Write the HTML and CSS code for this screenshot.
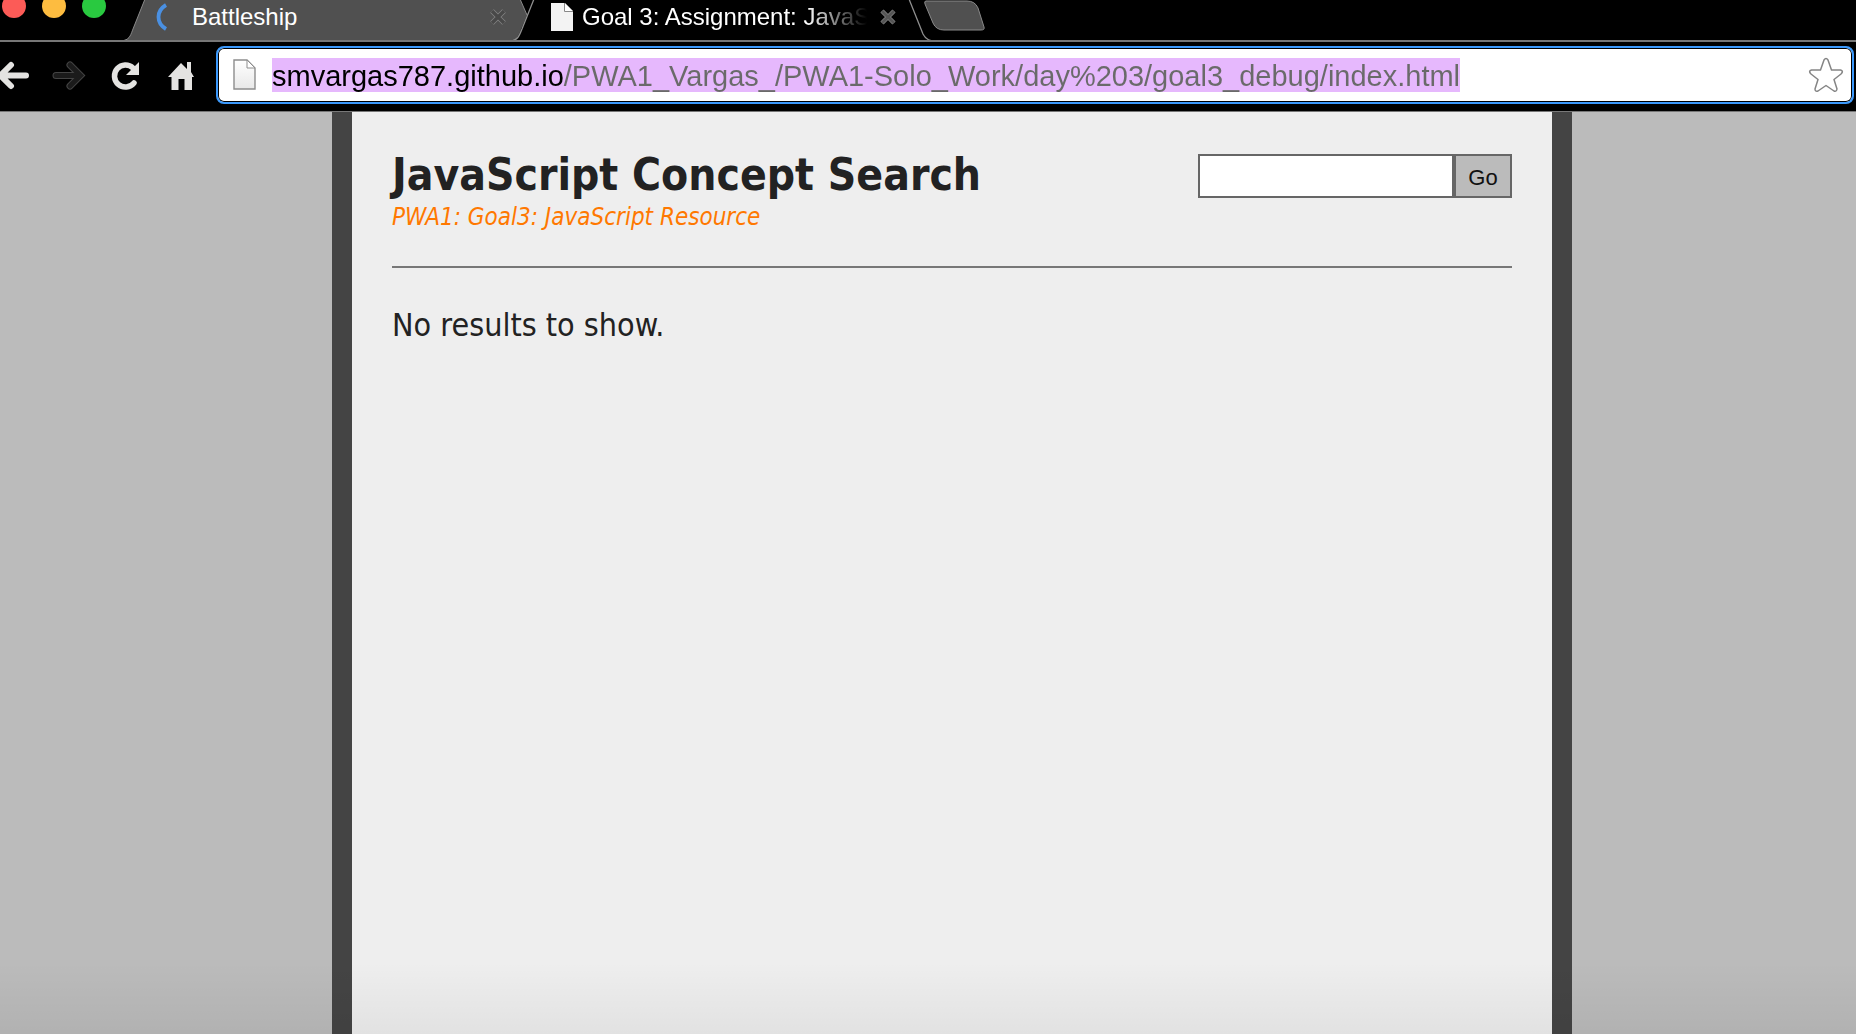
FILE: index.html
```html
<!DOCTYPE html>
<html lang="en">
<head>
<meta charset="utf-8">
<meta name="viewport" content="width=device-width, initial-scale=1">
<title>Goal 3: Assignment: JavaScript</title>
<link rel="stylesheet" href="styles.css">
</head>
<body>
<div class="browser">
  <header class="chrome">
    <div class="tab-strip">
      <svg class="tab-shapes" width="1000" height="42" viewBox="0 0 1000 42" aria-hidden="true">
        <path d="M124 40C130 39 131 34 133 29L145 -1H520L527 15L519 34Q516 41 511 41Z" fill="#505050"/>
        <path d="M124 40.500C130 39 131 34 133 29L145 -1" fill="none" stroke="#8a8a8a"/>
        <path d="M520 -1L527 15" fill="none" stroke="#8a8a8a"/>
        <path d="M511 42C518 41 519 36 522 29L534 -1H909L923 34Q926 41 933 42Z" fill="#000"/>
        <path d="M511 41C518 40 519 36 522 29L534 -1M909 -1L923 34Q926 40 933 41" fill="none" stroke="#8f8f8f" stroke-width="1.300"/>
        <path d="M926 1H967Q975 1 978 8L984 27Q985 30 981 30H944Q936 30 933 23L925 4Q924 1 926 1Z" fill="#505050" stroke="#8a8a8a"/>
      </svg>
      <div class="window-controls">
        <button class="light light-close" aria-label="Close window"></button>
        <button class="light light-minimize" aria-label="Minimize window"></button>
        <button class="light light-zoom" aria-label="Zoom window"></button>
      </div>
      <div class="tab">
        <svg class="tab-icon" width="22" height="28" viewBox="0 0 22 28" aria-hidden="true"><path d="M13 2C3 8 3 20 13 26" fill="none" stroke="#4a90e2" stroke-width="3.800"/></svg>
        <span class="tab-title">Battleship</span>
        <button class="tab-close" aria-label="Close Battleship"><svg width="18" height="18" viewBox="0 0 18 18"><path d="M3 3L15 15M15 3L3 15" stroke="#858585" stroke-width="5"/><path d="M3 3L15 15M15 3L3 15" stroke="#484848" stroke-width="3.500"/></svg></button>
      </div>
      <div class="tab tab-active">
        <svg class="tab-icon" width="22" height="28" viewBox="0 0 22 28" aria-hidden="true"><path d="M0 0H14L22 8V28H0Z" fill="#f3f3f3"/><path d="M13.500 0V8.500H22" fill="#fff" stroke="#888"/></svg>
        <span class="tab-title">Goal 3: Assignment: JavaSc</span>
        <button class="tab-close" aria-label="Close Goal 3"><svg width="18" height="18" viewBox="0 0 18 18"><path d="M3 3L15 15M15 3L3 15" stroke="#858585" stroke-width="4.500"/><path d="M3 3L15 15M15 3L3 15" stroke="#555" stroke-width="3"/></svg></button>
      </div>
    </div>
    <div class="toolbar">
      <nav class="nav-buttons" aria-label="Navigation">
        <button class="nav-button" aria-label="Back"><svg width="36" height="32" viewBox="0 0 36 32"><path d="M30 16.500H5M15 6L4.500 16.500L15 27" fill="none" stroke="#e4e3e1" stroke-width="6" stroke-linecap="round" stroke-linejoin="miter"/></svg></button>
        <button class="nav-button" aria-label="Forward" disabled><svg width="36" height="32" viewBox="0 0 36 32"><path d="M4 16.500H28M18 6L28.500 16.500L18 27" fill="none" stroke="#444" stroke-width="7" stroke-linecap="round"/><path d="M4 16.500H28M18 6L28.500 16.500L18 27" fill="none" stroke="#1b1b1b" stroke-width="5" stroke-linecap="round"/></svg></button>
        <button class="nav-button" aria-label="Reload"><svg width="36" height="32" viewBox="0 0 36 32"><path d="M26 24A11 11 0 1 1 25 9" fill="none" stroke="#e4e3e1" stroke-width="5.500" stroke-linecap="round"/><path d="M31 3V16H18Z" fill="#e4e3e1"/></svg></button>
        <button class="nav-button" aria-label="Home"><svg width="36" height="32" viewBox="0 0 36 32"><path d="M17 4L23 10V3H27V13L30 18H28V31H20.500V20H14.500V31H7.500V18H4Z" fill="#e4e3e1"/></svg></button>
      </nav>
      <div class="omnibox">
        <svg class="page-icon" width="24" height="32" viewBox="0 0 24 32" aria-hidden="true"><defs><linearGradient id="paper" x1="0" y1="0" x2="0" y2="1"><stop offset="0" stop-color="#fff"/><stop offset="1" stop-color="#e8e8e8"/></linearGradient></defs><path d="M1 1H14L22 9V30H1Z" fill="url(#paper)" stroke="#8d8d8d" stroke-width="1.400"/><path d="M14 1V9H22Z" fill="#fff" stroke="#8d8d8d"/></svg>
        <span class="selection"><input class="address" type="text" aria-label="Address" value="smvargas787.github.io/PWA1_Vargas_/PWA1-Solo_Work/day%203/goal3_debug/index.html" spellcheck="false"></span>
        <button class="bookmark" aria-label="Bookmark this page"><svg width="36" height="36" viewBox="0 0 36 36"><path d="M16 3Q18 0 20 3L23.500 13H32.500Q36 14 33 17L26 22.500L29 32Q28.500 35 26 34L18 28.500L10 34Q7 35 7 32L10 22.500L3 17Q0 14 3.500 13H12.500Z" fill="#fff" stroke="#858585" stroke-width="1.500" stroke-linejoin="round"/></svg></button>
      </div>
    </div>
  </header>
  <div class="viewport">
    <main class="page">
      <header class="page-header">
        <div>
          <h1 class="title">JavaScript Concept Search</h1>
          <p class="subtitle">PWA1: Goal3: JavaScript Resource</p>
        </div>
        <form class="search" role="search">
          <input class="search-field" type="text" aria-label="Search concepts">
          <button class="search-button" type="button">Go</button>
        </form>
      </header>
      <p class="results">No results to show.</p>
    </main>
  </div>
</div>
</body>
</html>
```
FILE: styles.css
```css
* { box-sizing: border-box; }

body {
  margin: 0;
  background: #bbb;
  color: #222;
  font-family: "DejaVu Sans Condensed", "DejaVu Sans", sans-serif;
}

button {
  padding: 0;
  border: 0;
  background: none;
}

svg { display: block; }

h1, p { margin: 0; }

.browser {
  display: flex;
  flex-direction: column;
  min-height: 100vh;
}

/* Browser window frame */
.chrome {
  background: #000;
  border-bottom: 1px solid #777;
  font-family: "Liberation Sans", Arial, sans-serif;
}

.tab-strip {
  position: relative;
  display: flex;
  height: 42px;
  overflow: hidden;
  border-bottom: 2px solid #777;
}

.tab-shapes {
  position: absolute;
  top: 0;
  left: 0;
}

.window-controls {
  display: flex;
  gap: 16px;
  width: 153px;
  margin-top: -6px;
  padding-left: 2px;
}

.light {
  width: 24px;
  height: 24px;
  border-radius: 50%;
}

.light-close { background: #fc5b57; }
.light-minimize { background: #fdbc40; }
.light-zoom { background: #29c940; }

.tab {
  position: relative;
  display: flex;
  align-items: center;
  width: 398px;
  height: 33px;
  padding-right: 44px;
  color: #fff;
  font-size: 24px;
  line-height: 32px;
}

.tab-active { width: 390px; }

.tab-icon { margin-right: 17px; }

.tab-active .tab-icon { margin-right: 9px; }

.tab-title {
  flex: 1;
  overflow: hidden;
  white-space: nowrap;
}

.tab-active .tab-title {
  mask-image: linear-gradient(to left, transparent 12px, #000 72px);
}

/* The active tab carries the toolbar, which has no line of its own */
.toolbar {
  display: flex;
  align-items: center;
  height: 69px;
  padding: 4px 2px 7px 0;
}

.nav-buttons {
  display: flex;
  flex: none;
  gap: 20px;
  width: 220px;
  margin-left: -4px;
}

.omnibox {
  display: flex;
  flex: 1;
  align-items: center;
  min-width: 0;
  height: 58px;
  padding: 0 8px 0 15px;
  border: 2px solid #3b99fc;
  border-radius: 8px;
  background: #fff;
  box-shadow: inset 0 0 0 1px #000;
}

.page-icon {
  flex: none;
  margin-right: 15px;
}

.selection {
  display: flex;
  background: #e6b8fd;
}

.address {
  field-sizing: content;
  height: 34px;
  padding: 2px 0 0;
  border: 0;
  outline: 0;
  background: linear-gradient(to right, #000 291px, #6a6a6a 291px);
  background-clip: text;
  color: transparent;
  font: 29px "Liberation Sans", Arial, sans-serif;
}

.bookmark { margin-left: auto; }

/* Web page */
.viewport {
  position: relative;
  display: flex;
  flex: 1;
  justify-content: center;
  padding-left: 48px;
}

.viewport::after {
  content: "";
  position: absolute;
  inset: auto 0 0 0;
  height: 72px;
  background: linear-gradient(rgba(0, 0, 0, 0), rgba(0, 0, 0, 0.05));
  pointer-events: none;
}

.page {
  width: 100%;
  max-width: 1240px;
  padding: 32px 40px;
  border: solid #444;
  border-width: 0 20px;
  background: #eee;
}

.page-header {
  display: flex;
  justify-content: space-between;
  align-items: flex-start;
  padding-bottom: 38px;
  border-bottom: 2px solid #777;
}

.title {
  font-size: 44px;
  line-height: 62px;
}

.subtitle {
  color: #ff7800;
  font-size: 24px;
  font-style: italic;
  line-height: 22px;
}

.search {
  display: flex;
  height: 44px;
  margin-top: 10px;
}

.search-field {
  width: 256px;
  border: 2px solid #666;
  background: #fff;
  font-size: 22px;
}

.search-button {
  width: 58px;
  padding-top: 4px;
  border: 2px solid #666;
  background: #bbb;
  color: #111;
  font: 22px "Liberation Sans", Arial, sans-serif;
}

.results {
  padding-top: 36px;
  font-size: 32px;
  line-height: 42px;
}
```
